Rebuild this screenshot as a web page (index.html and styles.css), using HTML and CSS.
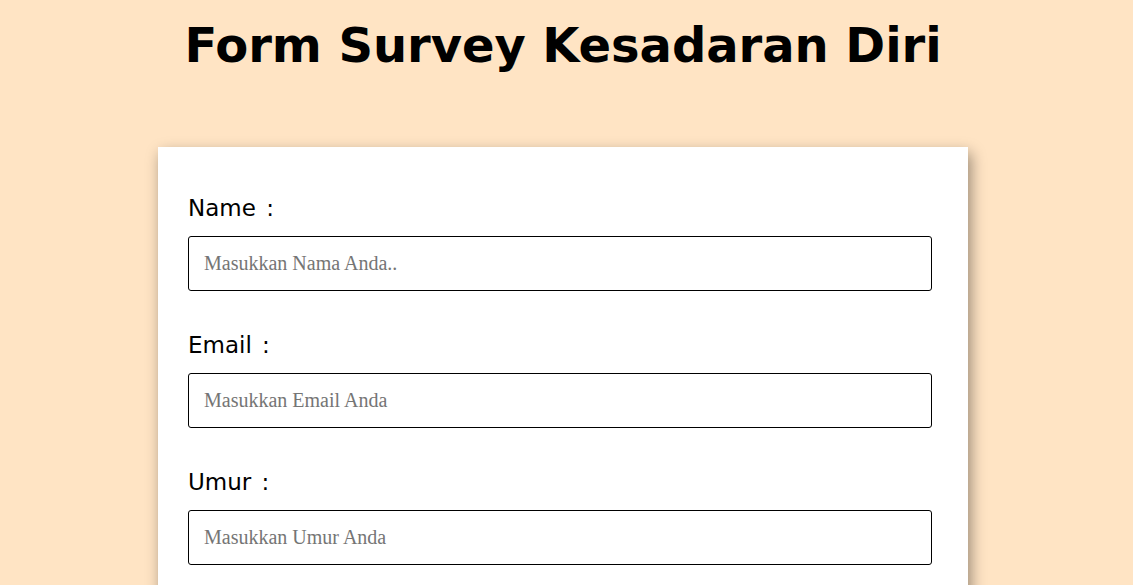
FILE: index.html
```html
<!DOCTYPE html>
<html lang="id">
<head>
<meta charset="utf-8">
<title>Form Survey Kesadaran Diri</title>
<link rel="stylesheet" href="styles.css">
</head>
<body>
<main class="page">
  <h1 class="title">Form Survey Kesadaran Diri</h1>
  <form class="card">
    <div class="field">
      <label class="label" for="name">Name :</label>
      <input class="input" id="name" type="text" placeholder="Masukkan Nama Anda..">
    </div>
    <div class="field">
      <label class="label" for="email">Email :</label>
      <input class="input" id="email" type="email" placeholder="Masukkan Email Anda">
    </div>
    <div class="field">
      <label class="label" for="umur">Umur :</label>
      <input class="input" id="umur" type="number" placeholder="Masukkan Umur Anda">
    </div>
  </form>
</main>
</body>
</html>
```

FILE: styles.css
```css
html, body {
  margin: 0;
  padding: 0;
  background: #ffe4c4;
}

body {
  font-family: "DejaVu Sans", Verdana, sans-serif;
  color: #000;
}

.page {
  padding-right: 7px;
  display: flex;
  flex-direction: column;
  align-items: center;
}

.title {
  font-family: "DejaVu Sans", Verdana, sans-serif;
  font-weight: bold;
  font-size: 48px;
  line-height: 56px;
  margin: 17px 0 74px;
  text-align: center;
  letter-spacing: -0.05px;
}

.card {
  width: 810px;
  box-sizing: border-box;
  background: #fff;
  padding: 48px 36px 20px 30px;
  box-shadow: 3px 6px 14px rgba(0, 0, 0, 0.4);
}

.field {
  display: flex;
  flex-direction: column;
  margin-bottom: 41px;
}

.label {
  font-size: 23px;
  line-height: 26px;
  margin-bottom: 15px;
  word-spacing: 3px;
}

.input {
  font-family: "Liberation Serif", "Times New Roman", serif;
  font-size: 20px;
  line-height: 23px;
  height: 55px;
  box-sizing: border-box;
  padding: 15px;
  border: 1px solid #000;
  border-radius: 3px;
  background: #fff;
  outline: none;
  -moz-appearance: textfield;
  appearance: textfield;
}

.input::placeholder {
  color: #757575;
}

.input::-webkit-outer-spin-button,
.input::-webkit-inner-spin-button {
  -webkit-appearance: none;
  margin: 0;
}
```
